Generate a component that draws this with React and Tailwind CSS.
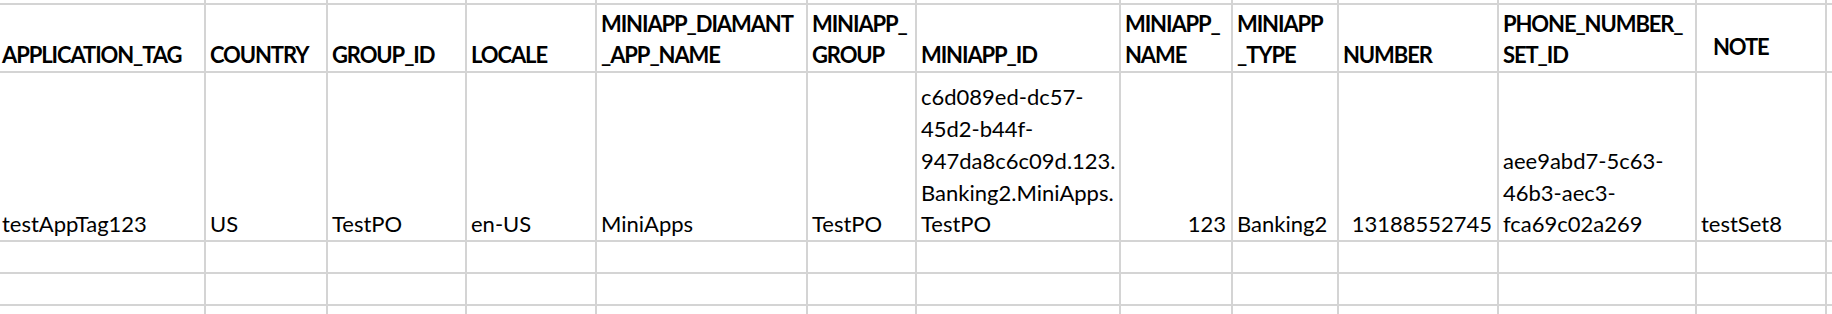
import React from "react";

const headers = [
  { lines: ["APPLICATION_TAG"], first: true },
  { lines: ["COUNTRY"] },
  { lines: ["GROUP_ID"] },
  { lines: ["LOCALE"] },
  { lines: ["MINIAPP_DIAMANT", "_APP_NAME"] },
  { lines: ["MINIAPP_", "GROUP"] },
  { lines: ["MINIAPP_ID"] },
  { lines: ["MINIAPP_", "NAME"] },
  { lines: ["MINIAPP", "_TYPE"] },
  { lines: ["NUMBER"] },
  { lines: ["PHONE_NUMBER_", "SET_ID"] },
  { lines: ["NOTE"], note: true },
  { lines: [] },
];

const data = [
  { lines: ["testAppTag123"], first: true },
  { lines: ["US"] },
  { lines: ["TestPO"] },
  { lines: ["en-US"] },
  { lines: ["MiniApps"] },
  { lines: ["TestPO"] },
  {
    lines: [
      "c6d089ed-dc57-",
      "45d2-b44f-",
      "947da8c6c09d.123.",
      "Banking2.MiniApps.",
      "TestPO",
    ],
  },
  { lines: ["123"], right: true },
  { lines: ["Banking2"] },
  { lines: ["13188552745"], right: true },
  { lines: ["aee9abd7-5c63-", "46b3-aec3-", "fca69c02a269"] },
  { lines: ["testSet8"] },
  { lines: [] },
];

function Cell({ c, bold }) {
  let cls = "bg-white flex flex-col justify-end overflow-hidden whitespace-nowrap ";
  if (c.first) cls += "pl-[2px] ";
  else if (c.note) cls += "pl-[16px] pb-[8px] ";
  else cls += "pl-[4px] ";
  if (c.right) cls += "items-end pr-[5px] ";
  if (bold) cls += "font-bold tracking-[-1.1px] ";
  return (
    <div className={cls}>
      {c.lines.map((l, i) => (
        <span key={i}>{l}</span>
      ))}
    </div>
  );
}

export default function App() {
  const blank = Array.from({ length: 13 });
  return (
    <div className="w-[1832px] h-[314px] overflow-hidden bg-white">
      <div
        className="grid h-[314px] gap-[2px] bg-[#d4d4d4] text-black text-[22px] leading-[31.7px] font-['Lato',_'Liberation_Sans',_sans-serif] grid-cols-[204px_120px_137px_128px_209px_107px_202px_110px_104px_158px_196px_128px_1fr] grid-rows-[3px_66px_167px_30px_30px_1fr]"
      >
        {blank.map((_, i) => (
          <div key={"a" + i} className="bg-white" />
        ))}
        {headers.map((c, i) => (
          <Cell key={"h" + i} c={c} bold />
        ))}
        {data.map((c, i) => (
          <Cell key={"d" + i} c={c} />
        ))}
        {blank.map((_, i) => (
          <div key={"b" + i} className="bg-white" />
        ))}
        {blank.map((_, i) => (
          <div key={"c" + i} className="bg-white" />
        ))}
        {blank.map((_, i) => (
          <div key={"e" + i} className="bg-white" />
        ))}
      </div>
    </div>
  );
}
